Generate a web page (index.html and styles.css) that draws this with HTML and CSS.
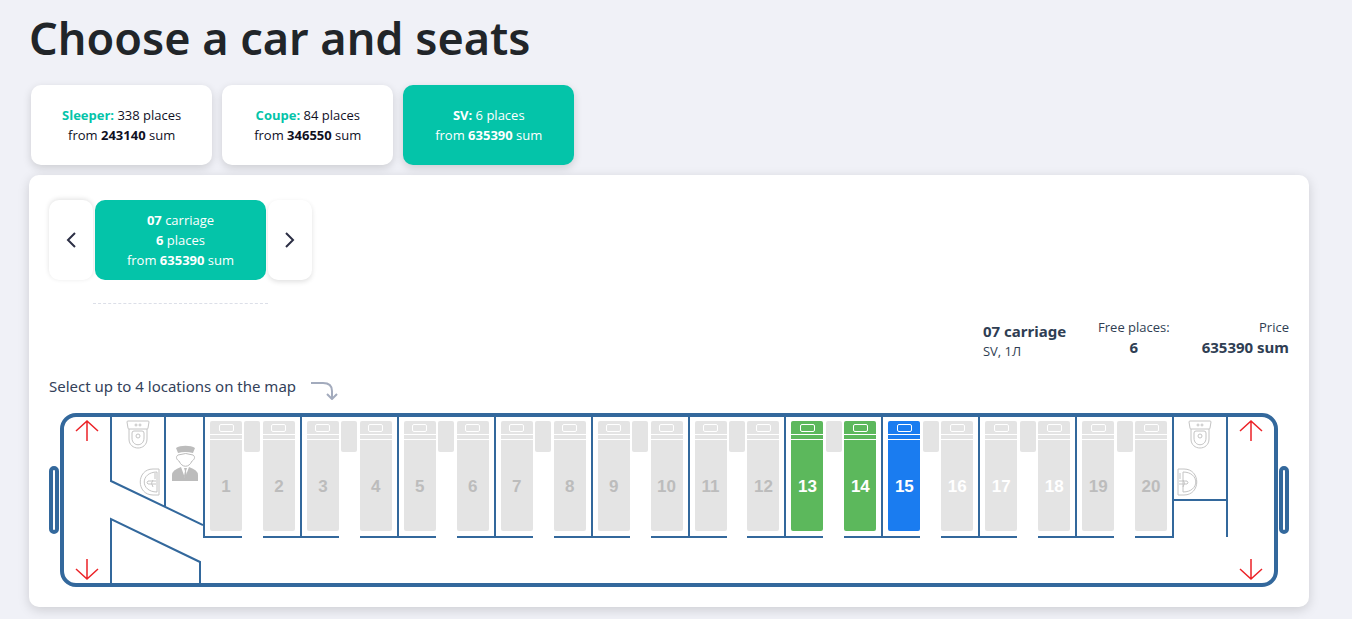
FILE: index.html
```html
<!DOCTYPE html>
<html lang="en">
<head>
  <meta charset="UTF-8">
  <meta name="viewport" content="width=device-width, initial-scale=1.0">
  <title>Choose a car and seats</title>
  <link rel="stylesheet" href="styles.css">
</head>
<body>
  <h1>Choose a car and seats</h1>

  <div class="car-types">
    <button class="type-btn"><span><b class="type-name">Sleeper:</b> 338 places</span><span>from <b>243140</b> sum</span></button>
    <button class="type-btn"><span><b class="type-name">Coupe:</b> 84 places</span><span>from <b>346550</b> sum</span></button>
    <button class="type-btn active"><span><b class="type-name">SV:</b> 6 places</span><span>from <b>635390</b> sum</span></button>
  </div>

  <main class="panel">
    <div class="carriages">
      <button class="arrow-btn prev" aria-label="Previous carriage">
        <svg width="10" height="16" viewBox="0 0 10 16"><path d="M9 1L2 8l7 7"/></svg>
      </button>
      <div class="carriage-slide">
        <button class="carriage-btn"><span><b>07</b> carriage</span><span><b>6</b> places</span><span>from <b>635390</b> sum</span></button>
      </div>
      <button class="arrow-btn next" aria-label="Next carriage">
        <svg width="10" height="16" viewBox="0 0 10 16"><path d="M1 1l7 7-7 7"/></svg>
      </button>
    </div>

    <div class="summary">
      <div class="summary-name"><b>07 carriage</b><span>SV, 1Л</span></div>
      <div class="summary-free"><span>Free places:</span><b>6</b></div>
      <div class="summary-price"><span>Price</span><b>635390 sum</b></div>
    </div>

    <div class="hint">
      <span>Select up to 4 locations on the map</span>
      <svg width="28" height="18" viewBox="0 0 28 18"><path d="M1 1h12q9 0 9 8v7M17 12l5 5 5-5"/></svg>
    </div>

    <div class="map">
      <div class="buffer"></div>
      <div class="wagon">
        <svg class="wagon-end" width="139" height="166" viewBox="0 0 139 166">
          <path class="exit" d="M23 24V4M12 14L23 4l11 10M23 142v20M12 152l11 10 11-10"/>
          <path class="wall" d="M47 0v64l92 44M101 0v89M47 166v-64l89 43v21"/>
          <use href="#toilet" x="63" y="4"/>
          <g class="fixture">
            <path d="M95 52v26h-6c-17 0-17-26 0-26zM93 55v20c-17 0-17-20 0-20z"/>
            <path d="M91 56v6M92 64h-8q-2 2 0 3h8M89 63q-3 3 0 7"/>
          </g>
          <g class="conductor">
            <path d="M112 31c4-3 15-3 19 0l-2 5q-8-2-15 0z"/>
            <path class="face" d="M114 38c-3 2-1 5 1 6 3 7 10 7 13 0 2-1 4-4 1-6q-7-3-15 0"/>
            <path d="M108 64v-6q0-5 9-8l4 11 4-11q9 3 9 8v6z"/>
            <path d="M120 51h3l-1 3 1 5-2 3-1-3 1-5z"/>
          </g>
        </svg>

        <div class="compartments" id="compartments"></div>

        <svg class="wagon-end" width="102" height="166" viewBox="0 0 102 166">
          <defs>
            <g id="toilet" class="fixture">
              <path d="M1 0h20q1 0 1 1l-1 6q0 1-1 1H2q-1 0-1-1L0 1q0-1 1-1zM2 8v10c0 12 18 12 18 0V8"/>
              <path d="M7 10h8q2 0 2 2v5c0 9-12 9-12 0v-5q0-2 2-2z"/>
              <circle cx="11" cy="15" r="2"/><circle cx="13" cy="4" r="1"/><circle cx="9" cy="4" r="1"/>
            </g>
          </defs>
          <path class="wall" d="M1 0v121M1 83h54M55 0v120"/>
          <path class="exit" d="M79 24V4M68 14L79 4l11 10M79 142v20M68 152l11 10 11-10"/>
          <use href="#toilet" x="17" y="4"/>
          <g class="fixture">
            <path d="M6 52v26h6c17 0 17-26 0-26zM11 55v20c17 0 17-20 0-20z"/>
            <path d="M8 56v6M7 64h8q2 2 0 3H7M11 63q3 3 0 7"/>
          </g>
        </svg>
      </div>
      <div class="buffer"></div>
    </div>
  </main>

  <script>
    const states = {
      13: "available",
      14: "available",
      15: "selected",
      16: "blocked",
      17: "blocked",
      18: "blocked"
    };

    function berth(number) {
      const state = states[number] || "taken";
      return `
        <div class="berth">
          <button class="seat ${state}"><span class="pillow"></span><span class="number">${number}</span></button>
        </div>`;
    }

    const compartments = document.getElementById("compartments");
    for (let i = 1; i <= 20; i += 2) {
      const compartment = document.createElement("div");
      compartment.className = "compartment";
      compartment.innerHTML = berth(i) + '<div class="table"></div>' + berth(i + 1);
      compartments.appendChild(compartment);
    }
  </script>
</body>
</html>
```
FILE: styles.css
```css
* {
  box-sizing: border-box;
}

body {
  margin: 0;
  padding: 8px 43px 12px 29px;
  font-family: "Segoe UI", "Open Sans", "Noto Sans", sans-serif;
  font-size: 13px;
  line-height: 20px;
  background-color: #f0f1f7;
  color: #10101f;
}

h1 {
  margin: 0 0 17px;
  font-family: "Noto Sans", sans-serif;
  font-size: 45px;
  line-height: 60px;
  font-weight: 600;
  color: #212529;
}

button {
  font: inherit;
  color: inherit;
  border: none;
  padding: 0;
  cursor: pointer;
}

.car-types {
  display: flex;
  gap: 10px;
  padding: 0 2px;
  margin-bottom: 10px;
}

.type-btn,
.carriage-btn {
  display: flex;
  flex-direction: column;
  align-items: center;
  justify-content: center;
  min-width: 171px;
  height: 80px;
  padding: 0 31px;
  border-radius: 10px;
  background-color: #fff;
}

.type-btn {
  box-shadow: 0 3px 8px rgba(0, 0, 0, 0.15);
}

.type-name {
  color: #04c4a9;
}

.type-btn.active,
.carriage-btn {
  background-color: #04c4a9;
  color: #fff;
}

.active .type-name {
  color: #fff;
}

.panel {
  padding: 25px 20px 20px;
  border-radius: 10px;
  background-color: #fff;
  box-shadow: 0 3px 12px rgba(0, 0, 0, 0.15);
}

.carriages {
  display: flex;
}

.carriage-slide {
  padding: 0 2px 23px;
  border-bottom: 1px dashed #dcdfe8;
}

.arrow-btn {
  display: flex;
  align-items: center;
  justify-content: center;
  width: 44px;
  height: 80px;
  border-radius: 10px;
  background-color: #fff;
}

.arrow-btn svg {
  fill: none;
  stroke: #2c2f45;
  stroke-width: 2;
}

.prev {
  box-shadow: 0 -1px 5px rgba(0, 0, 0, 0.12);
}

.next {
  box-shadow: 0 2px 5px rgba(0, 0, 0, 0.12);
}

.summary {
  display: flex;
  justify-content: flex-end;
  gap: 32px;
  margin-top: 13px;
  color: #2f3e53;
}

.summary div {
  display: flex;
  flex-direction: column;
}

.summary b {
  font-family: "Noto Sans", sans-serif;
  font-size: 15px;
}

.summary .summary-name {
  padding-top: 4px;
}

.summary-free {
  align-items: center;
}

.summary-price {
  align-items: flex-end;
}

.hint {
  display: flex;
  align-items: center;
  gap: 14px;
  height: 24px;
  margin: 13px 0 15px;
  font-family: "Noto Sans", sans-serif;
  font-size: 15px;
  color: #33415a;
}

.hint svg {
  margin-top: 10px;
  fill: none;
  stroke: #a3abbd;
  stroke-width: 2;
}

/* carriage map */
.map {
  display: flex;
  align-items: center;
  gap: 1px;
}

.buffer {
  width: 10px;
  height: 68px;
  border: 4px solid #33689c;
  border-radius: 5px;
}

.wagon {
  flex: 1;
  display: flex;
  border: 4px solid #33689c;
  border-radius: 16px;
}

.wagon-end {
  flex: none;
  fill: none;
}

.wall {
  stroke: #33689c;
  stroke-width: 2;
}

.exit {
  stroke: #ec2227;
  stroke-width: 1.5;
}

.fixture {
  stroke: #c4c4c4;
  stroke-width: 1;
}

.conductor {
  fill: #bcbcbc;
}

.face {
  fill: none;
  stroke: #bcbcbc;
}

.compartments {
  flex: 1;
  display: flex;
}

.compartment {
  flex: 1;
  display: flex;
  justify-content: space-between;
  height: 121px;
  border-left: 2px solid #33689c;
}

.berth {
  width: 37px;
  padding: 4px 0 0 5px;
  border-bottom: 2px solid #33689c;
}

.berth:last-child {
  padding-left: 0;
}

.table {
  width: 16px;
  height: 31px;
  margin-top: 4px;
  border-radius: 2px;
  background-color: #e4e4e4;
}

.seat {
  display: flex;
  flex-direction: column;
  align-items: center;
  width: 32px;
  height: 110px;
  padding-top: 3px;
  border-radius: 2px;
  background: linear-gradient(#fff, #fff) 0 13px / 100% 1px no-repeat,
    linear-gradient(#fff, #fff) 0 18px / 100% 1px no-repeat #e4e4e4;
  color: #fff;
}

.pillow {
  width: 15px;
  height: 8px;
  border: 1px solid #fff;
  border-radius: 2px;
}

.number {
  margin-top: 45px;
  font-family: "Liberation Sans", Arial, sans-serif;
  font-size: 17px;
  font-weight: bold;
}

.taken {
  color: #bcbcbc;
}

.available {
  background-color: #5cb85c;
}

.selected {
  background-color: #1a7cf0;
}
```
